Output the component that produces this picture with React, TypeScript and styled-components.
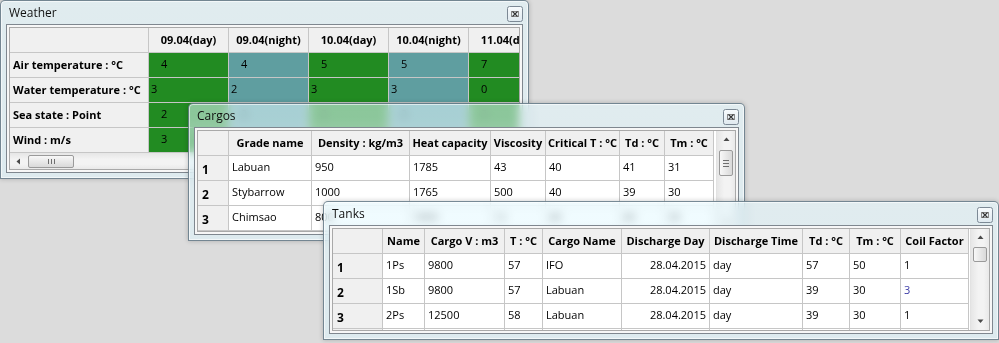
import React from "react";
import styled, { createGlobalStyle } from "styled-components";

const GlobalStyle = createGlobalStyle`
  html, body { margin: 0; padding: 0; background: #dcdcdc; }
  body { font-family: "Open Sans", "Noto Sans", sans-serif; }
`;

const Desktop = styled.div`
  position: relative;
  width: 999px;
  height: 343px;
  overflow: hidden;
  background: #dcdcdc;
  font-family: "Open Sans", "Noto Sans", sans-serif;
  font-size: 11px;
  color: #000;
`;

const Win = styled.section<{ $x: number; $y: number; $w: number; $h: number }>`
  position: absolute;
  left: ${(p) => p.$x}px;
  top: ${(p) => p.$y}px;
  width: ${(p) => p.$w}px;
  height: ${(p) => p.$h}px;
  box-sizing: border-box;
  display: flex;
  flex-direction: column;
  padding: 0 5px 5px;
  border: 1px solid rgba(80, 100, 115, 0.75);
  border-radius: 5px 5px 0 0;
  background: linear-gradient(180deg, rgba(228, 249, 255, 0.55), rgba(222, 246, 254, 0.55));
  backdrop-filter: blur(5px);
  box-shadow: 0 0 5px rgba(0, 0, 0, 0.22), inset 0 0 0 1px rgba(255, 255, 255, 0.6);
`;

const TitleBar = styled.header`
  height: 23px;
  flex: none;
  display: flex;
  align-items: center;
  justify-content: space-between;
  padding-left: 3px;
`;

const Title = styled.span`
  font-size: 12px;
  color: #101010;
`;

const CloseBtn = styled.button`
  width: 16px;
  height: 16px;
  margin-top: 3px;
  padding: 0;
  border: 0;
  background: none;
  display: flex;
`;

const Frame = styled.div`
  flex: 1;
  min-height: 0;
  display: flex;
  box-sizing: border-box;
  border: 1px solid #7f878f;
  padding: 2px;
  background: #f7f7f7;
`;

const Viewport = styled.div<{ $dir: "row" | "column" }>`
  flex: 1;
  min-width: 0;
  min-height: 0;
  display: flex;
  flex-direction: ${(p) => p.$dir};
  border: 1px solid #a9a9a9;
  background: #fff;
  overflow: hidden;
`;

const Clip = styled.div`
  flex: 1;
  min-width: 0;
  min-height: 0;
  overflow: hidden;
`;

const Grid = styled.div<{ $cols: string }>`
  display: grid;
  grid-template-columns: ${(p) => p.$cols};
  grid-auto-rows: 25px;
  width: max-content;
`;

const CellBase = styled.div`
  box-sizing: border-box;
  border-right: 1px solid #c6c6c6;
  border-bottom: 1px solid #c6c6c6;
  display: flex;
  white-space: nowrap;
  overflow: hidden;
  line-height: 16px;
`;

const HeadCell = styled(CellBase)`
  background: #f0f0f0;
  font-weight: 700;
  align-items: center;
  justify-content: center;
`;

const RowHead = styled(CellBase)<{ $num?: boolean }>`
  background: #f0f0f0;
  font-weight: 700;
  align-items: center;
  padding-left: ${(p) => (p.$num ? 4 : 3)}px;
  padding-top: ${(p) => (p.$num ? 3 : 0)}px;
  font-size: ${(p) => (p.$num ? 12 : 11)}px;
`;

const DataCell = styled(CellBase)<{ $bg?: string; $indent?: number; $right?: boolean; $color?: string }>`
  background: ${(p) => p.$bg ?? "#fff"};
  color: ${(p) => p.$color ?? "#000"};
  align-items: flex-start;
  padding-top: 3px;
  padding-left: ${(p) => p.$indent ?? 3}px;
  padding-right: 3px;
  justify-content: ${(p) => (p.$right ? "flex-end" : "flex-start")};
`;

const VScroll = styled.div`
  width: 18px;
  flex: none;
  display: flex;
  flex-direction: column;
  align-items: center;
  background: linear-gradient(90deg, #e6e6e6, #f3f3f3 40%, #f3f3f3 70%, #e9e9e9);
  border-left: 1px solid #e2e2e2;
`;

const HScroll = styled.div`
  height: 16px;
  flex: none;
  display: flex;
  align-items: center;
  background: linear-gradient(180deg, #e6e6e6, #f3f3f3 40%, #f3f3f3 70%, #e9e9e9);
`;

const ArrowBox = styled.div<{ $size: number }>`
  width: ${(p) => p.$size}px;
  height: ${(p) => p.$size}px;
  flex: none;
  display: flex;
  align-items: center;
  justify-content: center;
`;

const Spacer = styled.div`
  flex: 1;
`;

const VThumb = styled.div<{ $h: number; $top: number }>`
  width: 14px;
  height: ${(p) => p.$h}px;
  margin-top: ${(p) => p.$top}px;
  box-sizing: border-box;
  border: 1px solid #9a9a9a;
  border-radius: 2px;
  background: linear-gradient(90deg, #f8f8f8, #e8e8e8 50%, #d9d9d9);
  display: flex;
  flex-direction: column;
  align-items: center;
  justify-content: center;
  gap: 2px;
`;

const HThumb = styled.div<{ $w: number; $left: number }>`
  width: ${(p) => p.$w}px;
  height: 13px;
  margin-left: ${(p) => p.$left}px;
  box-sizing: border-box;
  border: 1px solid #9a9a9a;
  border-radius: 2px;
  background: linear-gradient(180deg, #f8f8f8, #e8e8e8 50%, #d9d9d9);
  display: flex;
  align-items: center;
  justify-content: center;
  gap: 2px;
`;

const GripH = styled.span`
  width: 6px;
  height: 1px;
  background: #6e6e6e;
`;

const GripV = styled.span`
  width: 1px;
  height: 5px;
  background: #6e6e6e;
`;

const CloseIcon = () => (
  <svg width="16" height="16" viewBox="0 0 16 16">
    <defs>
      <linearGradient id="cbg" x1="0" y1="0" x2="0" y2="1">
        <stop offset="0" stopColor="#f8fbfd" />
        <stop offset="1" stopColor="#dfe9ef" />
      </linearGradient>
    </defs>
    <rect x="0.5" y="0.5" width="15" height="15" rx="2" fill="url(#cbg)" stroke="#7c8995" />
    <rect x="4.5" y="5.5" width="7" height="5" fill="none" stroke="#8a8a8a" />
    <path d="M5.5 5.5 L10.5 10.5 M10.5 5.5 L5.5 10.5" stroke="#333" strokeWidth="1.1" />
  </svg>
);

const Tri = ({ dir }: { dir: "up" | "down" | "left" }) => {
  const d =
    dir === "up" ? "M0.5 4 L3.5 0.5 L6.5 4 Z" : dir === "down" ? "M0.5 0.5 L3.5 4 L6.5 0.5 Z" : "M4 0.5 L0.5 3.5 L4 6.5 Z";
  const w = dir === "left" ? 5 : 7;
  const h = dir === "left" ? 7 : 5;
  return (
    <svg width={w} height={h} viewBox={`0 0 ${w} ${h}`}>
      <path d={d} fill="#4a4a4a" />
    </svg>
  );
};

const VScrollbar = ({ thumbTop, thumbH, grip }: { thumbTop: number; thumbH: number; grip: boolean }) => (
  <VScroll>
    <ArrowBox $size={17}>
      <Tri dir="up" />
    </ArrowBox>
    <VThumb $h={thumbH} $top={thumbTop}>
      {grip && (
        <>
          <GripH />
          <GripH />
          <GripH />
        </>
      )}
    </VThumb>
    <Spacer />
    <ArrowBox $size={17}>
      <Tri dir="down" />
    </ArrowBox>
  </VScroll>
);

const Window = ({
  x,
  y,
  w,
  h,
  title,
  children,
}: {
  x: number;
  y: number;
  w: number;
  h: number;
  title: string;
  children: React.ReactNode;
}) => (
  <Win $x={x} $y={y} $w={w} $h={h}>
    <TitleBar>
      <Title>{title}</Title>
      <CloseBtn aria-label="close">
        <CloseIcon />
      </CloseBtn>
    </TitleBar>
    <Frame>{children}</Frame>
  </Win>
);

const px = (ws: number[]) => ws.map((w) => `${w}px`).join(" ");

const weatherCols = ["09.04(day)", "09.04(night)", "10.04(day)", "10.04(night)", "11.04(day)"];
const weatherRows = [
  { label: "Air temperature : °C", vals: ["4", "4", "5", "5", "7"], ind: [1, 1, 1, 1, 1] },
  { label: "Water temperature : °C", vals: ["3", "2", "3", "3", "0"], ind: [0, 0, 0, 0, 1] },
  { label: "Sea state : Point", vals: ["2", "2", "2", "2", "3"], ind: [1, 1, 1, 1, 1] },
  { label: "Wind : m/s", vals: ["3", "4", "4", "5", "5"], ind: [1, 1, 1, 1, 1] },
];

const cargoHead = ["Grade name", "Density : kg/m3", "Heat capacity", "Viscosity", "Critical T : °C", "Td : °C", "Tm : °C"];
const cargoW = [31, 83, 98, 81, 55, 74, 45, 49];
const cargoRows = [
  ["Labuan", "950", "1785", "43", "40", "41", "31"],
  ["Stybarrow", "1000", "1765", "500", "40", "39", "30"],
  ["Chimsao", "800", "1800", "12", "40", "40", "30"],
  ["Kutubu", "780", "1900", "8", "38", "36", "28"],
];

const tankHead = ["Name", "Cargo V : m3", "T : °C", "Cargo Name", "Discharge Day", "Discharge Time", "Td : °C", "Tm : °C", "Coil Factor"];
const tankW = [50, 42, 80, 38, 79, 88, 93, 47, 51, 68];
const tankRows = [
  ["1Ps", "9800", "57", "IFO", "28.04.2015", "day", "57", "50", "1"],
  ["1Sb", "9800", "57", "Labuan", "28.04.2015", "day", "39", "30", "3"],
  ["2Ps", "12500", "58", "Labuan", "28.04.2015", "day", "39", "30", "1"],
  ["2Sb", "12500", "58", "Labuan", "28.04.2015", "day", "39", "30", "1"],
];

export default function App() {
  return (
    <>
      <GlobalStyle />
      <Desktop>
        <Window x={0} y={0} w={529} h={179} title="Weather">
          <Viewport $dir="column">
            <Clip>
              <Grid $cols={px([139, 80, 80, 80, 80, 80])}>
                <HeadCell />
                {weatherCols.map((c) => (
                  <HeadCell key={c}>{c}</HeadCell>
                ))}
                {weatherRows.map((r) => (
                  <React.Fragment key={r.label}>
                    <RowHead>{r.label}</RowHead>
                    {r.vals.map((v, i) => (
                      <DataCell key={i} $bg={i % 2 === 0 ? "#228b22" : "#5f9ea0"} $indent={r.ind[i] ? 12 : 2}>
                        {v}
                      </DataCell>
                    ))}
                  </React.Fragment>
                ))}
              </Grid>
            </Clip>
            <HScroll>
              <ArrowBox $size={16}>
                <Tri dir="left" />
              </ArrowBox>
              <HThumb $w={46} $left={2}>
                <GripV />
                <GripV />
                <GripV />
              </HThumb>
            </HScroll>
          </Viewport>
        </Window>

        <Window x={188} y={103} w={557} h={138} title="Cargos">
          <Viewport $dir="row">
            <Clip>
              <Grid $cols={px(cargoW)}>
                <HeadCell />
                {cargoHead.map((c) => (
                  <HeadCell key={c}>{c}</HeadCell>
                ))}
                {cargoRows.map((r, ri) => (
                  <React.Fragment key={ri}>
                    <RowHead $num>{ri + 1}</RowHead>
                    {r.map((v, i) => (
                      <DataCell key={i}>{v}</DataCell>
                    ))}
                  </React.Fragment>
                ))}
              </Grid>
            </Clip>
            <VScrollbar thumbTop={2} thumbH={26} grip />
          </Viewport>
        </Window>

        <Window x={323} y={201} w={676} h={139} title="Tanks">
          <Viewport $dir="row">
            <Clip>
              <Grid $cols={px(tankW)}>
                <HeadCell />
                {tankHead.map((c) => (
                  <HeadCell key={c}>{c}</HeadCell>
                ))}
                {tankRows.map((r, ri) => (
                  <React.Fragment key={ri}>
                    <RowHead $num>{ri + 1}</RowHead>
                    {r.map((v, i) => (
                      <DataCell
                        key={i}
                        $right={i === 4}
                        $color={ri === 1 && i === 8 ? "#3a3aa6" : undefined}
                      >
                        {v}
                      </DataCell>
                    ))}
                  </React.Fragment>
                ))}
              </Grid>
            </Clip>
            <VScrollbar thumbTop={1} thumbH={15} grip={false} />
          </Viewport>
        </Window>
      </Desktop>
    </>
  );
}
